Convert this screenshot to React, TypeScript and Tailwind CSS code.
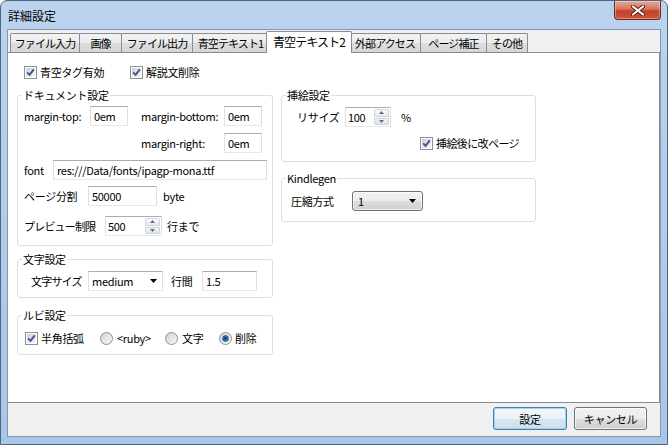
import type { ReactNode } from "react";

function CheckBox({ checked = true }: { checked?: boolean }) {
  return (
    <span className="flex h-[13px] w-[13px] shrink-0 items-center justify-center border border-[#8e8f8f] bg-white p-[1px]">
      <span className="flex h-full w-full items-center justify-center bg-gradient-to-br from-[#cbcfd5] to-[#f7f7f7]">
        {checked && (
          <svg width="9" height="9" viewBox="0 0 9 9">
            <path d="M1.2 4.4 L3.6 6.8 L7.8 1.4" fill="none" stroke="#3d5490" strokeWidth="1.9" />
          </svg>
        )}
      </span>
    </span>
  );
}

function Radio({ checked = false }: { checked?: boolean }) {
  return (
    <span className="flex h-[13px] w-[13px] shrink-0 items-center justify-center rounded-full border border-[#8e8f8f] bg-gradient-to-br from-[#cfd3d9] to-[#f8f8f8]">
      {checked && (
        <span className="h-[7px] w-[7px] rounded-full border border-[#2a5f95] bg-[radial-gradient(circle_at_45%_45%,#0f2f5a_0%,#2a6bb0_55%,#8cc4ee_100%)]" />
      )}
    </span>
  );
}

function TextBox({ value, className = "" }: { value: string; className?: string }) {
  return (
    <div
      className={`flex h-[20px] shrink-0 items-center border border-x-[#dbdfe6] border-t-[#abadb3] border-b-[#e3e9ef] bg-white pl-[3px] ${className}`}
    >
      {value}
    </div>
  );
}

function Spinner({ value, className = "" }: { value: string; className?: string }) {
  return (
    <div
      className={`flex h-[20px] shrink-0 items-stretch border border-x-[#dbdfe6] border-t-[#abadb3] border-b-[#e3e9ef] bg-white ${className}`}
    >
      <span className="flex flex-1 items-center pl-[2px]">{value}</span>
      <span className="my-[1px] mr-[1px] flex w-[15px] flex-col gap-[1px]">
        <span className="flex flex-1 items-center justify-center rounded-t-[2px] border border-[#cfd3d8] bg-gradient-to-b from-[#fbfbfb] to-[#e6e9ee]">
          <svg width="5" height="3" viewBox="0 0 5 3">
            <path d="M0 3 L2.5 0 L5 3z" fill="#5b6f93" />
          </svg>
        </span>
        <span className="flex flex-1 items-center justify-center rounded-b-[2px] border border-[#cfd3d8] bg-gradient-to-b from-[#f4f5f7] to-[#dfe3e9]">
          <svg width="5" height="3" viewBox="0 0 5 3">
            <path d="M0 0 L2.5 3 L5 0z" fill="#5b6f93" />
          </svg>
        </span>
      </span>
    </div>
  );
}

function Arrow() {
  return (
    <svg width="7" height="4" viewBox="0 0 7 4">
      <path d="M0 0 L7 0 L3.5 4z" fill="#000" />
    </svg>
  );
}

function Group({ title, className = "", children }: { title: string; className?: string; children: ReactNode }) {
  return (
    <fieldset className={`rounded-[3px] border border-[#d5dfe5] ${className}`}>
      <legend className="ml-[4px] px-[1px] leading-[14px]">{title}</legend>
      {children}
    </fieldset>
  );
}

const tabs = [
  { label: "ファイル入力", w: "w-[70px]", m: "" },
  { label: "画像", w: "w-[43px]", m: "-ml-[1px]" },
  { label: "ファイル出力", w: "w-[72px]", m: "-ml-[1px]" },
  { label: "青空テキスト1", w: "w-[77px]", m: "-ml-[1px]" },
  { label: "青空テキスト2", w: "w-[86px]", m: "-ml-[3px]", active: true },
  { label: "外部アクセス", w: "w-[72px]", m: "-ml-[3px]" },
  { label: "ページ補正", w: "w-[67px]", m: "-ml-[1px]" },
  { label: "その他", w: "w-[42px]", m: "-ml-[1px]" },
];

export default function App() {
  return (
    <div className="relative h-[445px] w-[668px] overflow-hidden whitespace-nowrap rounded-t-[7px] border border-[#4d6685] bg-[linear-gradient(180deg,#bcd3ee_0%,#b3cdea_40%,#aac6e6_100%)] font-['Noto_Sans_CJK_JP',sans-serif] text-[11px] leading-[14px] tracking-[-0.3px] text-black">
      {/* Title bar */}
      <div className="flex h-[28px] items-center pl-[7px] pt-[1px]">
        <span className="text-[12px] tracking-normal">詳細設定</span>
      </div>
      <div className="absolute right-[6px] top-0 flex h-[19px] w-[47px] items-center justify-center rounded-b-[4px] border border-t-0 border-[#6b2a20] bg-[linear-gradient(180deg,#e9a899_0%,#d8735d_45%,#c2412b_55%,#d2553a_100%)] shadow-[inset_0_0_0_1px_rgba(255,255,255,0.35)]">
        <svg width="14" height="11" viewBox="0 0 14 11">
          <path d="M2 1.5 L12 9.5 M12 1.5 L2 9.5" stroke="#5a1a12" strokeWidth="4" strokeLinecap="round" />
          <path d="M2 1.5 L12 9.5 M12 1.5 L2 9.5" stroke="#ffffff" strokeWidth="2.2" strokeLinecap="round" />
        </svg>
      </div>

      {/* Client area */}
      <div className="mx-[6px] flex h-[408px] flex-col border border-[#8497b3] bg-[#f0f0f0]">
        {/* Tabs */}
        <div className="mt-[1px] flex h-[21px] items-end pl-[2px] tracking-[-0.9px]">
          {tabs.map((t) =>
            t.active ? (
              <div
                key={t.label}
                className={`relative z-10 -mb-[1px] flex h-[22px] ${t.w} ${t.m} shrink-0 items-start justify-center rounded-t-[2px] border border-b-0 border-[#898c95] bg-white pt-[3px] text-[12px]`}
              >
                {t.label}
              </div>
            ) : (
              <div
                key={t.label}
                className={`flex h-[19px] ${t.w} ${t.m} shrink-0 items-center justify-center rounded-t-[2px] border border-b-0 border-[#898c95] bg-[linear-gradient(180deg,#f3f3f3_0%,#ebebeb_50%,#dddddd_51%,#d6d6d6_100%)]`}
              >
                {t.label}
              </div>
            )
          )}
        </div>

        {/* Tab panel */}
        <div className="flex h-[351px] border-y border-r border-[#898c95] bg-white pl-[9px]">
          {/* Left column */}
          <div className="flex w-[256px] flex-col">
            <div className="mt-[11px] flex h-[16px] items-center pl-[7px]">
              <div className="flex w-[106px] items-center gap-[3px]">
                <CheckBox />
                <span>青空タグ有効</span>
              </div>
              <div className="flex items-center gap-[3px]">
                <CheckBox />
                <span>解説文削除</span>
              </div>
            </div>

            <Group title="ドキュメント設定" className="mt-[8px] pb-[9px]">
              <div className="flex flex-col pl-[6px]">
                <div className="mt-[4px] flex h-[20px] items-center">
                  <span className="w-[66px] shrink-0">margin-top:</span>
                  <TextBox value="0em" className="w-[38px]" />
                  <span className="ml-[13px] w-[83px] shrink-0">margin-bottom:</span>
                  <TextBox value="0em" className="w-[38px]" />
                </div>
                <div className="mt-[7px] flex h-[20px] items-center">
                  <span className="ml-[117px] w-[83px] shrink-0">margin-right:</span>
                  <TextBox value="0em" className="w-[38px]" />
                </div>
                <div className="mt-[7px] flex h-[20px] items-center">
                  <span className="w-[29px] shrink-0">font</span>
                  <TextBox value="res:///Data/fonts/ipagp-mona.ttf" className="w-[214px]" />
                </div>
                <div className="mt-[6px] flex h-[20px] items-center">
                  <span className="w-[64px] shrink-0">ページ分割</span>
                  <TextBox value="50000" className="w-[69px]" />
                  <span className="ml-[6px]">byte</span>
                </div>
                <div className="mt-[10px] flex h-[20px] items-center">
                  <span className="w-[81px] shrink-0 tracking-[-0.8px]">プレビュー制限</span>
                  <Spinner value="500" className="w-[57px]" />
                  <span className="ml-[5px]">行まで</span>
                </div>
              </div>
            </Group>

            <Group title="文字設定" className="mt-[6px] pb-[6px]">
              <div className="mt-[5px] flex h-[20px] items-center pl-[13px]">
                <span className="w-[57px] shrink-0 tracking-[-0.8px]">文字サイズ</span>
                <div className="flex h-[20px] w-[75px] shrink-0 items-center justify-between border border-x-[#dbdfe6] border-t-[#abadb3] border-b-[#e3e9ef] bg-white pl-[3px] pr-[5px]">
                  <span>medium</span>
                  <Arrow />
                </div>
                <span className="ml-[8px] w-[31px] shrink-0">行間</span>
                <TextBox value="1.5" className="w-[55px]" />
              </div>
            </Group>

            <Group title="ルビ設定" className="mt-[10px] pb-[8px]">
              <div className="mt-[8px] flex h-[16px] items-center pl-[7px]">
                <div className="flex w-[75px] shrink-0 items-center gap-[3px]">
                  <CheckBox />
                  <span>半角括弧</span>
                </div>
                <div className="flex w-[65px] shrink-0 items-center gap-[4px]">
                  <Radio />
                  <span>&lt;ruby&gt;</span>
                </div>
                <div className="flex w-[54px] shrink-0 items-center gap-[4px]">
                  <Radio />
                  <span>文字</span>
                </div>
                <div className="flex items-center gap-[3px]">
                  <Radio checked />
                  <span>削除</span>
                </div>
              </div>
            </Group>
          </div>

          {/* Right column */}
          <div className="ml-[8px] mt-[35px] flex w-[255px] flex-col">
            <Group title="挿絵設定" className="pb-[10px]">
              <div className="mt-[5px] flex h-[20px] items-center pl-[15px]">
                <span className="w-[48px] shrink-0">リサイズ</span>
                <Spinner value="100" className="w-[46px]" />
                <span className="ml-[10px]">%</span>
              </div>
              <div className="mt-[8px] flex h-[16px] items-center gap-[3px] pl-[138px]">
                <CheckBox />
                <span className="tracking-[-0.6px]">挿絵後に改ページ</span>
              </div>
            </Group>

            <Group title="Kindlegen" className="mt-[9px] pb-[10px]">
              <div className="mt-[6px] flex h-[20px] items-center pl-[9px]">
                <span className="w-[61px] shrink-0">圧縮方式</span>
                <div className="flex h-[20px] w-[71px] shrink-0 items-center justify-between rounded-[3px] border border-[#707070] bg-[linear-gradient(180deg,#f2f2f2_0%,#ebebeb_50%,#dddddd_51%,#cfcfcf_100%)] pl-[5px] pr-[6px] shadow-[inset_0_0_0_1px_rgba(255,255,255,0.7)]">
                  <span>1</span>
                  <Arrow />
                </div>
              </div>
            </Group>
          </div>
        </div>

        {/* Bottom buttons */}
        <div className="flex justify-end gap-[7px] pr-[13px] pt-[4px]">
          <button className="flex h-[23px] w-[74px] items-center justify-center rounded-[3px] border border-[#3c7fb1] bg-[linear-gradient(180deg,#f3f8fc_0%,#e9f1f8_50%,#d8e6f1_51%,#cddfee_100%)] shadow-[inset_0_0_0_1px_#9fd5f3]">
            設定
          </button>
          <button className="flex h-[23px] w-[73px] items-center justify-center rounded-[3px] border border-[#707070] bg-[linear-gradient(180deg,#f2f2f2_0%,#ebebeb_50%,#dddddd_51%,#cfcfcf_100%)] shadow-[inset_0_0_0_1px_rgba(255,255,255,0.7)]">
            キャンセル
          </button>
        </div>
      </div>
    </div>
  );
}
